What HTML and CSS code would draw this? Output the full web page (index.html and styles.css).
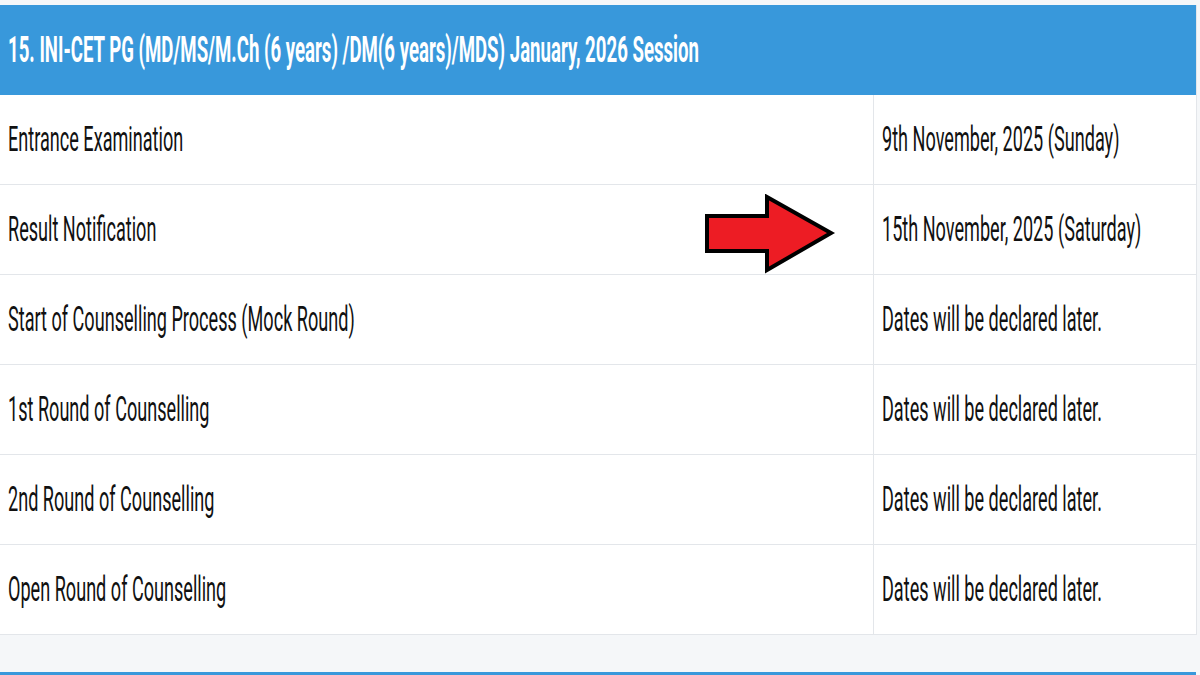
FILE: index.html
```html
<!DOCTYPE html>
<html lang="en">
<head>
<meta charset="utf-8">
<title>INI-CET PG Schedule</title>
<link rel="stylesheet" href="styles.css">
</head>
<body>
<div class="page">
  <div class="table-wrap">
    <table class="schedule">
      <colgroup>
        <col class="col-event">
        <col class="col-date">
      </colgroup>
      <thead>
        <tr>
          <th colspan="2"><span class="sq">15. INI-CET PG (MD/MS/M.Ch (6 years) /DM(6 years)/MDS) January, 2026 Session</span></th>
        </tr>
      </thead>
      <tbody>
        <tr><td><span class="sq">Entrance Examination</span></td><td><span class="sq">9th November, 2025 (Sunday)</span></td></tr>
        <tr><td><span class="sq">Result Notification</span></td><td><span class="sq">15th November, 2025 (Saturday)</span></td></tr>
        <tr><td><span class="sq">Start of Counselling Process (Mock Round)</span></td><td><span class="sq">Dates will be declared later.</span></td></tr>
        <tr><td><span class="sq">1st Round of Counselling</span></td><td><span class="sq">Dates will be declared later.</span></td></tr>
        <tr><td><span class="sq">2nd Round of Counselling</span></td><td><span class="sq">Dates will be declared later.</span></td></tr>
        <tr><td><span class="sq">Open Round of Counselling</span></td><td><span class="sq">Dates will be declared later.</span></td></tr>
      </tbody>
    </table>
    <svg class="arrow" width="140" height="84" viewBox="0 0 140 84" aria-hidden="true">
      <polygon points="4,22 64,22 64,3 128,39 64,76 64,57 4,57" fill="#ed1c24" stroke="#000" stroke-width="4" stroke-linejoin="miter"/>
    </svg>
  </div>
  <div class="bottom-bar"></div>
</div>
</body>
</html>
```
FILE: styles.css
```css
html, body {
  margin: 0;
  padding: 0;
  background: #f5f7f9;
}
.page {
  width: 1200px;
  height: 675px;
  overflow: hidden;
  display: flex;
  flex-direction: column;
  font-family: Roboto, "Liberation Sans", sans-serif;
}
.table-wrap {
  position: relative;
  margin-top: 5px;
  width: 1196px;
}
.schedule {
  width: 1196px;
  border-collapse: collapse;
  table-layout: fixed;
  background: #fff;
}
.col-event { width: 873px; }
.col-date { width: 323px; }
.schedule th {
  background: #3898db;
  color: #fff;
  height: 90px;
  padding: 0 0 0 8px;
  text-align: left;
  font-weight: 700;
  font-size: 36px;
  white-space: nowrap;
  border-right: 1px solid #e3e6ea;
}
.schedule td {
  height: 89px;
  padding: 0 0 0 8px;
  border-bottom: 1px solid #e3e6ea;
  border-right: 1px solid #e3e6ea;
  color: #111;
  font-size: 35px;
  white-space: nowrap;
  vertical-align: middle;
}
.sq {
  display: inline-block;
  transform: scaleX(0.517);
  transform-origin: left center;
  line-height: 1;
}
.arrow {
  position: absolute;
  left: 703px;
  top: 189px;
}
.bottom-bar {
  margin-top: auto;
  width: 1196px;
  height: 3px;
  background: #3898db;
}
```
